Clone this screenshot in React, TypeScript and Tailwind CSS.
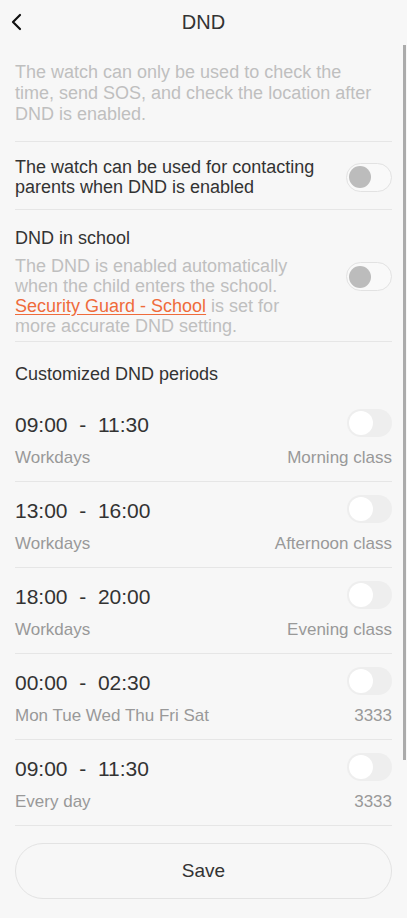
import { useState } from "react";

type Period = {
  start: string;
  end: string;
  days: string;
  label: string;
};

const periods: Period[] = [
  { start: "09:00", end: "11:30", days: "Workdays", label: "Morning class" },
  { start: "13:00", end: "16:00", days: "Workdays", label: "Afternoon class" },
  { start: "18:00", end: "20:00", days: "Workdays", label: "Evening class" },
  { start: "00:00", end: "02:30", days: "Mon Tue Wed Thu Fri Sat", label: "3333" },
  { start: "09:00", end: "11:30", days: "Every day", label: "3333" },
];

function OutlineSwitch({ on, onClick }: { on: boolean; onClick: () => void }) {
  return (
    <button
      onClick={onClick}
      className="relative h-[29px] w-[46px] shrink-0 rounded-full border border-[#e2e2e2] bg-[#f9f9f9]"
    >
      <span
        className={
          on
            ? "absolute top-[2.5px] left-[20px] h-[22px] w-[22px] rounded-full bg-[#bcbcbc]"
            : "absolute top-[2.5px] left-[2px] h-[22px] w-[22px] rounded-full bg-[#bcbcbc]"
        }
      />
    </button>
  );
}

function SoftSwitch({ on, onClick }: { on: boolean; onClick: () => void }) {
  return (
    <button
      onClick={onClick}
      className="relative h-[28px] w-[45px] shrink-0 rounded-full bg-[#eeeeee]"
    >
      <span
        className={
          on
            ? "absolute top-[2px] left-[19px] h-[24px] w-[24px] rounded-full bg-white"
            : "absolute top-[2px] left-[2px] h-[24px] w-[24px] rounded-full bg-white"
        }
      />
    </button>
  );
}

export default function App() {
  const [contactParents, setContactParents] = useState(false);
  const [inSchool, setInSchool] = useState(false);
  const [enabled, setEnabled] = useState<boolean[]>(periods.map(() => false));

  const togglePeriod = (i: number) => {
    setEnabled((prev) => prev.map((v, idx) => (idx === i ? !v : v)));
  };

  return (
    <div
      className="relative min-h-[918px] w-full bg-[#f7f7f7] text-[#333333]"
      style={{ fontFamily: '"Liberation Sans", Arial, sans-serif' }}
    >
      {/* scroll indicator */}
      <div className="absolute top-[45px] right-[1px] h-[715px] w-[3px] bg-[#ababab]" />

      <div className="flex h-[44px] items-center px-[10px]">
        <svg width="14" height="18" viewBox="0 0 14 18" fill="none" className="shrink-0">
          <path d="M10 2 L3 9 L10 16" stroke="#111" strokeWidth="2.2" strokeLinecap="round" strokeLinejoin="round" />
        </svg>
        <h1 className="flex-1 pr-[14px] text-center text-[20px] leading-none">DND</h1>
      </div>

      <div className="px-[15px]">
        <p className="border-b border-[#e6e6e6] pt-[18px] pb-[16px] text-[18px] leading-[21px] text-[#bfbfbf]">
          The watch can only be used to check the
          <br />
          time, send SOS, and check the location after
          <br />
          DND is enabled.
        </p>

        <div className="flex items-center justify-between border-b border-[#e6e6e6] pt-[15px] pb-[12px]">
          <p className="text-[18px] leading-[20px]">
            The watch can be used for contacting
            <br />
            parents when DND is enabled
          </p>
          <OutlineSwitch on={contactParents} onClick={() => setContactParents(!contactParents)} />
        </div>

        <div className="border-b border-[#e6e6e6] pt-[18px] pb-[5px]">
          <p className="text-[18px] leading-[20px]">DND in school</p>
          <div className="mt-[8px] flex items-start justify-between">
            <p className="text-[18px] leading-[20px] text-[#bfbfbf]">
              The DND is enabled automatically
              <br />
              when the child enters the school.
              <br />
              <span className="text-[#ef6b3b] underline underline-offset-2">Security Guard - School</span>{" "}
              is set for
              <br />
              more accurate DND setting.
            </p>
            <div className="pt-[6px]">
              <OutlineSwitch on={inSchool} onClick={() => setInSchool(!inSchool)} />
            </div>
          </div>
        </div>

        <p className="pt-[22px] pb-[12px] text-[18px] leading-[20px]">Customized DND periods</p>

        {periods.map((p, i) => (
          <div key={i} className="border-b border-[#e6e6e6] pt-[13px] pb-[13px]">
            <div className="flex items-center justify-between">
              <span className="pt-[3px] text-[21px] leading-[24px] whitespace-pre">
                {p.start}
                {"  -  "}
                {p.end}
              </span>
              <SoftSwitch on={enabled[i]} onClick={() => togglePeriod(i)} />
            </div>
            <div className="mt-[11px] flex items-center justify-between text-[17px] leading-[20px] text-[#999999]">
              <span>{p.days}</span>
              <span>{p.label}</span>
            </div>
          </div>
        ))}

        <button className="mt-[17px] h-[56px] w-full rounded-full border border-[#e3e3e3] text-[19px] text-[#333333]">
          Save
        </button>
      </div>
    </div>
  );
}
